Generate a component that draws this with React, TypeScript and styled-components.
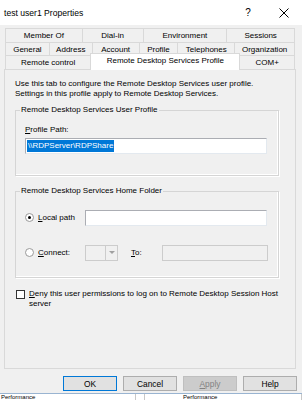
import React from 'react'
import styled, {createGlobalStyle} from 'styled-components'

const GlobalStyle = createGlobalStyle`
  html, body {
    margin: 0;
    padding: 0;
    background: #f0f0f0;
  }
  body {
    font-family: "Liberation Sans", Arial, sans-serif;
    font-size: 8px;
    color: #000;
  }
  * {
    box-sizing: border-box;
  }
`

const Window = styled.div`
  width: 302px;
  height: 400px;
  display: flex;
  flex-direction: column;
  background: #f0f0f0;
  overflow: hidden;
`

const TitleBar = styled.div`
  height: 25px;
  display: flex;
  align-items: center;
  background: #fff;
  padding-left: 4px;
`

const Title = styled.div`
  flex: 1;
  font-size: 8.6px;
`

const TitleButton = styled.div`
  width: 36px;
  height: 25px;
  display: flex;
  align-items: center;
  justify-content: center;
  font-size: 10px;
`

const TabArea = styled.div`
  margin: 3px 7px 0 5px;
  display: flex;
  flex-direction: column;
`

const TabRow = styled.div<{$h: number}>`
  display: flex;
  height: ${(p) => p.$h}px;
`

const Tab = styled.div<{$w: number; $active?: boolean}>`
  width: ${(p) => p.$w}px;
  display: flex;
  align-items: center;
  justify-content: center;
  border: 1px solid #d9d9d9;
  border-bottom: none;
  margin-left: -1px;
  background: ${(p) => (p.$active ? '#fff' : '#f0f0f0')};
  position: relative;
  z-index: ${(p) => (p.$active ? 2 : 1)};
  ${(p) =>
    p.$active &&
    `
    margin-top: -2px;
    height: 17px;
    padding-bottom: 3px;
  `}
  &:first-child {
    margin-left: 0;
  }
`

const Panel = styled.div`
  margin: 0 6px 0 4px;
  height: 300px;
  border: 1px solid #d9d9d9;
  background: #f0f0f0;
  padding: 9px 16px 0 10px;
  display: flex;
  flex-direction: column;
`

const Description = styled.div`
  line-height: 10px;
  white-space: nowrap;
`

const Group = styled.fieldset<{$top: number; $pt: number; $pb: number}>`
  margin: ${(p) => p.$top}px 0 0 0;
  padding: ${(p) => p.$pt}px 10px ${(p) => p.$pb}px 9px;
  border: 1px solid #d5d5d5;
  box-shadow: inset -1px -1px 0 #fff, 1px 1px 0 #fff;
  min-width: 0;
`

const Legend = styled.legend`
  padding: 0 1px;
  margin-left: -5px;
  line-height: 10px;
  white-space: nowrap;
`

const FieldLabel = styled.div`
  line-height: 10px;
  margin-bottom: 3px;
`

const TextBox = styled.div<{$w: number; $disabled?: boolean}>`
  width: ${(p) => p.$w}px;
  height: 16px;
  border: 1px solid #7a7a7a;
  border-color: ${(p) => (p.$disabled ? '#cccccc' : '#abadb3 #e3e9ef #e3e9ef #abadb3')};
  background: ${(p) => (p.$disabled ? '#f0f0f0' : '#fff')};
  display: flex;
  align-items: center;
  padding-left: 1px;
`

const Selected = styled.span`
  background: #0078d7;
  color: #fff;
  line-height: 12px;
  padding: 0 1px;
`

const OptionRow = styled.div<{$mt?: number}>`
  display: flex;
  align-items: center;
  height: 17px;
  margin-top: ${(p) => p.$mt ?? 0}px;
`

const Choice = styled.div<{$w: number}>`
  width: ${(p) => p.$w}px;
  display: flex;
  align-items: center;
  gap: 4px;
  white-space: nowrap;
`

const Radio = styled.span<{$on?: boolean}>`
  width: 9px;
  height: 9px;
  border-radius: 50%;
  border: 1px solid #9a9a9a;
  background: #fff;
  display: inline-flex;
  align-items: center;
  justify-content: center;
  &::after {
    content: '';
    width: 3px;
    height: 3px;
    border-radius: 50%;
    background: ${(p) => (p.$on ? '#000' : 'transparent')};
  }
`

const Combo = styled.div`
  width: 33px;
  height: 16px;
  border: 1px solid #cccccc;
  background: #f0f0f0;
  display: flex;
  justify-content: flex-end;
`

const ComboArrow = styled.div`
  width: 12px;
  border-left: 1px solid #cccccc;
  display: flex;
  align-items: center;
  justify-content: center;
  &::after {
    content: '';
    border-left: 3px solid transparent;
    border-right: 3px solid transparent;
    border-top: 3px solid #a0a0a0;
  }
`

const ToLabel = styled.span`
  margin-left: 13px;
  width: 31px;
`

const CheckRow = styled.div`
  margin-top: 11px;
  display: flex;
  align-items: flex-start;
  gap: 4px;
  line-height: 10px;
  margin-left: 1px;
`

const CheckBox = styled.span`
  width: 9px;
  height: 9px;
  border: 1px solid #333;
  background: #fff;
  flex-shrink: 0;
  margin-top: 1px;
`

const ButtonBar = styled.div`
  margin-top: 7px;
  display: flex;
  justify-content: flex-end;
  gap: 6px;
  padding-right: 5px;
`

const Button = styled.div<{$default?: boolean; $disabled?: boolean}>`
  width: 54px;
  height: 15px;
  display: flex;
  align-items: center;
  justify-content: center;
  background: ${(p) => (p.$disabled ? '#cccccc' : '#e1e1e1')};
  border: 1px solid ${(p) => (p.$default ? '#0078d7' : p.$disabled ? '#bfbfbf' : '#adadad')};
  color: ${(p) => (p.$disabled ? '#838383' : '#000')};
  font-size: 8.4px;
`

const BehindStrip = styled.div`
  margin-top: 2px;
  flex: 1;
  background: #fff;
  border-top: 1px solid #99b4d1;
  display: flex;
  overflow: hidden;
  font-size: 6px;
  line-height: 6px;
`

const BehindCell = styled.div<{$w: number; $indent?: number}>`
  width: ${(p) => p.$w}px;
  border-right: 1px solid #c8c8c8;
  white-space: nowrap;
  padding-left: ${(p) => p.$indent ?? 1}px;
`

const tabRows = [
  {
    h: 14,
    tabs: [
      {label: 'Member Of', w: 78},
      {label: 'Dial-in', w: 62},
      {label: 'Environment', w: 85},
      {label: 'Sessions', w: 69},
    ],
  },
  {
    h: 13,
    tabs: [
      {label: 'General', w: 45},
      {label: 'Address', w: 44},
      {label: 'Account', w: 48},
      {label: 'Profile', w: 40},
      {label: 'Telephones', w: 58},
      {label: 'Organization', w: 61},
    ],
  },
  {
    h: 14,
    tabs: [
      {label: 'Remote control', w: 87},
      {label: 'Remote Desktop Services Profile', w: 151, active: true},
      {label: 'COM+', w: 56},
    ],
  },
]

export default function App() {
  return (
    <Window>
      <GlobalStyle />
      <TitleBar>
        <Title>test user1 Properties</Title>
        <TitleButton>?</TitleButton>
        <TitleButton>
          <svg width="10" height="10" viewBox="0 0 10 10">
            <path d="M0.5 0.5 L9.5 9.5 M9.5 0.5 L0.5 9.5" stroke="#000" strokeWidth="1" />
          </svg>
        </TitleButton>
      </TitleBar>

      <TabArea>
        {tabRows.map((row, i) => (
          <TabRow key={i} $h={row.h}>
            {row.tabs.map((t) => (
              <Tab key={t.label} $w={t.w} $active={'active' in t && t.active}>
                {t.label}
              </Tab>
            ))}
          </TabRow>
        ))}
      </TabArea>

      <Panel>
        <Description>
          Use this tab to configure the Remote Desktop Services user profile.
          <br />
          Settings in this profile apply to Remote Desktop Services.
        </Description>

        <Group $top={6} $pt={10} $pb={21}>
          <Legend>Remote Desktop Services User Profile</Legend>
          <FieldLabel>
            <u>P</u>rofile Path:
          </FieldLabel>
          <TextBox $w={242}>
            <Selected>{'\\\\RDPServer\\RDPShare'}</Selected>
          </TextBox>
        </Group>

        <Group $top={10} $pt={13} $pb={16}>
          <Legend>Remote Desktop Services Home Folder</Legend>
          <OptionRow>
            <Choice $w={60}>
              <Radio $on />
              <span>
                <u>L</u>ocal path
              </span>
            </Choice>
            <TextBox $w={182} />
          </OptionRow>
          <OptionRow $mt={18}>
            <Choice $w={60}>
              <Radio />
              <span>
                <u>C</u>onnect:
              </span>
            </Choice>
            <Combo>
              <ComboArrow />
            </Combo>
            <ToLabel>
              <u>T</u>o:
            </ToLabel>
            <TextBox $w={106} $disabled />
          </OptionRow>
        </Group>

        <CheckRow>
          <CheckBox />
          <span>
            <u>D</u>eny this user permissions to log on to Remote Desktop Session Host
            <br />
            server
          </span>
        </CheckRow>
      </Panel>

      <ButtonBar>
        <Button $default>OK</Button>
        <Button>Cancel</Button>
        <Button $disabled>
          <u>A</u>pply
        </Button>
        <Button>Help</Button>
      </ButtonBar>

      <BehindStrip>
        <BehindCell $w={136}>Performance</BehindCell>
        <BehindCell $w={9} />
        <BehindCell $w={157} $indent={38}>
          Performance
        </BehindCell>
      </BehindStrip>
    </Window>
  )
}
